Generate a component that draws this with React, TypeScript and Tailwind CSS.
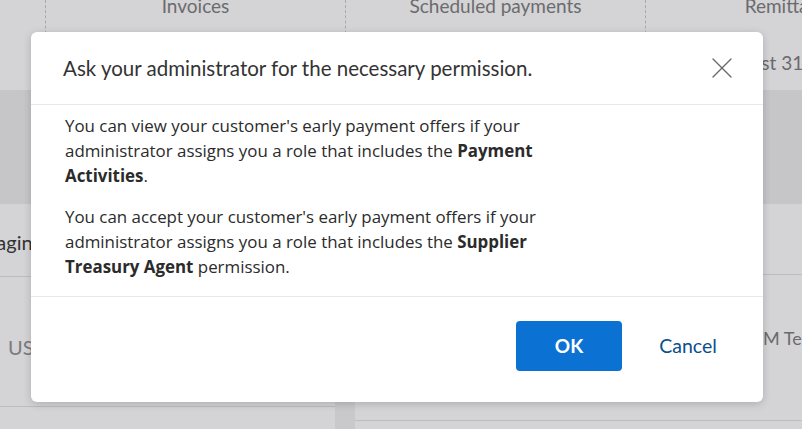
import { X } from 'lucide-react';

const tabs = [
  { label: 'Invoices', sub: '' },
  { label: 'Scheduled payments', sub: '' },
  { label: 'Remittances', sub: 'August 31' },
];

const PermissionDialog = () => {
  return (
    <div className="flex h-[370px] w-[732px] flex-col rounded-[6px] bg-white shadow-[0_2px_8px_rgba(0,0,0,0.18)]">
      <div className="flex h-[73px] items-center justify-between border-b border-[#e8e8e8] pl-[32px] pr-[23px]">
        <h1 className="font-['Lato',sans-serif] text-[20.5px] text-[#333]">Ask your administrator for the necessary permission.</h1>
        <X className="h-[36px] w-[36px] text-[#6a6a6a]" strokeWidth={0.9} />
      </div>
      <div className="flex flex-col gap-[16px] border-b border-[#e8e8e8] pb-[17px] pl-[34px] pr-[30px] pt-[8px] font-['Open_Sans',sans-serif] text-[16.9px] leading-[25px] text-[#2b2b2b]">
        <p className="w-[482px]">
          You can view your customer's early payment offers if your administrator assigns you a role that includes the{' '}
          <b className="font-bold">Payment Activities</b>.
        </p>
        <p className="w-[482px]">
          You can accept your customer's early payment offers if your administrator assigns you a role that includes the{' '}
          <b className="font-bold">Supplier Treasury Agent</b> permission.
        </p>
      </div>
      <div className="flex flex-1 items-start justify-end gap-[13px] pr-[22px] pt-[24px]">
        <button className="h-[50px] w-[106px] rounded-[4px] bg-[#0b72d3] text-[19px] font-bold text-white">OK</button>
        <button className="h-[50px] w-[106px] text-[19.5px] text-[#0a4f8c]">Cancel</button>
      </div>
    </div>
  );
};

export default function App() {
  return (
    <div className="relative h-[429px] w-[802px] overflow-hidden bg-[#d4d3d6] font-['Lato',sans-serif]">
      <div className="flex h-[90px] pl-[45px]">
        {tabs.map((tab) => (
          <div key={tab.label} className="flex w-[300px] shrink-0 flex-col items-center border-l border-dashed border-[#a9a8ab] text-[#6b6b6d]">
            <span className="-mt-[8px] whitespace-nowrap text-[19px]">{tab.label}</span>
            <span className="-ml-[70px] mt-[28px] whitespace-nowrap text-[19px]">{tab.sub}</span>
          </div>
        ))}
      </div>
      <div className="h-[114px] bg-[#c6c5c8]" />
      <div className="flex h-[225px] bg-[#c9c8cb]">
        <div className="flex w-[335px] flex-col bg-[#d4d3d6]">
          <div className="flex h-[73px] items-center border-b border-[#bdbcbf] text-[20px] text-[#333]">
            <span className="-ml-[43px] mt-[4px]">Managing</span>
          </div>
          <div className="flex h-[130px] items-start border-b border-[#bdbcbf] pl-[8px] pt-[55px] text-[20px] text-[#7a7a7c]">USD</div>
        </div>
        <div className="ml-[20px] flex flex-1 flex-col bg-[#d4d3d6]">
          <div className="h-[71px] border-b border-[#bdbcbf]" />
          <div className="flex h-[146px] items-center justify-end border-b border-[#bdbcbf] text-[18px] text-[#6b6b6d]">
            <span className="-mr-[14px] -mt-[18px]">PM Test</span>
          </div>
        </div>
      </div>
      <div className="absolute left-[31px] top-[32px]">
        <PermissionDialog />
      </div>
    </div>
  );
}
